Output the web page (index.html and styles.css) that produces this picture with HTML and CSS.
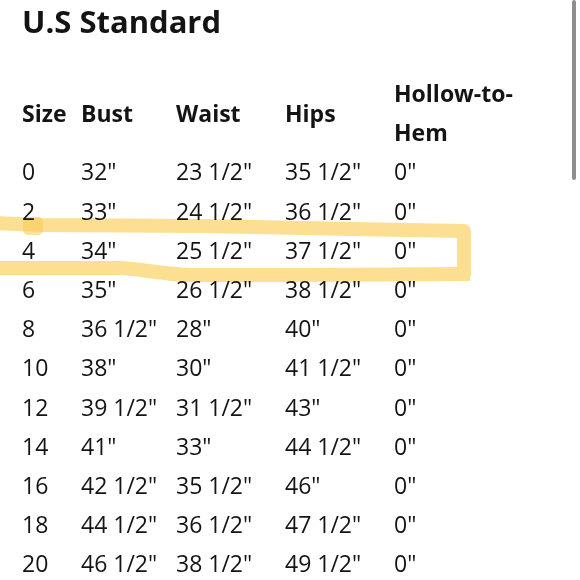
FILE: index.html
```html
<!DOCTYPE html>
<html>
<head>
<meta charset="utf-8">
<link rel="stylesheet" href="styles.css">
</head>
<body>
<div class="page">
  <h1 class="title">U.S Standard</h1>
  <table class="chart">
    <colgroup>
      <col class="c-size"><col class="c-bust"><col class="c-waist"><col class="c-hips"><col class="c-hem">
    </colgroup>
    <thead>
      <tr><th>Size</th><th>Bust</th><th>Waist</th><th>Hips</th><th>Hollow-to-Hem</th></tr>
    </thead>
    <tbody>
      <tr><td>0</td><td>32"</td><td>23 1/2"</td><td>35 1/2"</td><td>0"</td></tr>
      <tr><td>2</td><td>33"</td><td>24 1/2"</td><td>36 1/2"</td><td>0"</td></tr>
      <tr><td>4</td><td>34"</td><td>25 1/2"</td><td>37 1/2"</td><td>0"</td></tr>
      <tr><td>6</td><td>35"</td><td>26 1/2"</td><td>38 1/2"</td><td>0"</td></tr>
      <tr><td>8</td><td>36 1/2"</td><td>28"</td><td>40"</td><td>0"</td></tr>
      <tr><td>10</td><td>38"</td><td>30"</td><td>41 1/2"</td><td>0"</td></tr>
      <tr><td>12</td><td>39 1/2"</td><td>31 1/2"</td><td>43"</td><td>0"</td></tr>
      <tr><td>14</td><td>41"</td><td>33"</td><td>44 1/2"</td><td>0"</td></tr>
      <tr><td>16</td><td>42 1/2"</td><td>35 1/2"</td><td>46"</td><td>0"</td></tr>
      <tr><td>18</td><td>44 1/2"</td><td>36 1/2"</td><td>47 1/2"</td><td>0"</td></tr>
      <tr><td>20</td><td>46 1/2"</td><td>38 1/2"</td><td>49 1/2"</td><td>0"</td></tr>
    </tbody>
  </table>
  <svg class="marker" width="580" height="580" viewBox="0 0 580 580">
    <g fill="none" stroke="#fcdc86" stroke-width="14" stroke-linejoin="round" opacity="0.9">
      <path d="M-5 223 L40 225 L200 226 L350 229 L464 231 L464 276" stroke-linecap="butt"/>
      <path d="M-5 268 L120 268 C150 270 160 274 190 275 L300 275 L470 274" stroke-linecap="butt"/>
    </g>
    <rect x="23" y="217" width="20" height="18" rx="5" fill="#f9cd5a" opacity="0.6"/>
  </svg>
  <div class="scrollbar"></div>
</div>
</body>
</html>
```

FILE: styles.css
```css
html, body {
  margin: 0;
  padding: 0;
  background: #ffffff;
}

.page {
  position: relative;
  width: 580px;
  height: 580px;
  overflow: hidden;
  padding-left: 22px;
  box-sizing: border-box;
  font-family: "Open Sans", "Noto Sans", sans-serif;
  color: #141414;
}

.title {
  margin: 0 0 32px 0;
  font-size: 31px;
  line-height: 42px;
  font-weight: 700;
}

.chart {
  border-collapse: collapse;
  border-spacing: 0;
  table-layout: fixed;
  font-size: 23px;
  line-height: 39.2px;
}

.c-size { width: 59px; }
.c-bust { width: 95px; }
.c-waist { width: 109px; }
.c-hips { width: 109px; }
.c-hem { width: 122px; }

.chart th,
.chart td {
  padding: 0;
  text-align: left;
  vertical-align: middle;
}

.chart th {
  font-weight: 700;
}

.chart td {
  font-weight: 400;
  white-space: nowrap;
}

.marker {
  position: absolute;
  left: 0;
  top: 0;
  mix-blend-mode: multiply;
  pointer-events: none;
}

.scrollbar {
  position: absolute;
  right: 4px;
  top: 0;
  width: 4px;
  height: 180px;
  background: #8e8e8e;
  border-radius: 2px;
}
```
